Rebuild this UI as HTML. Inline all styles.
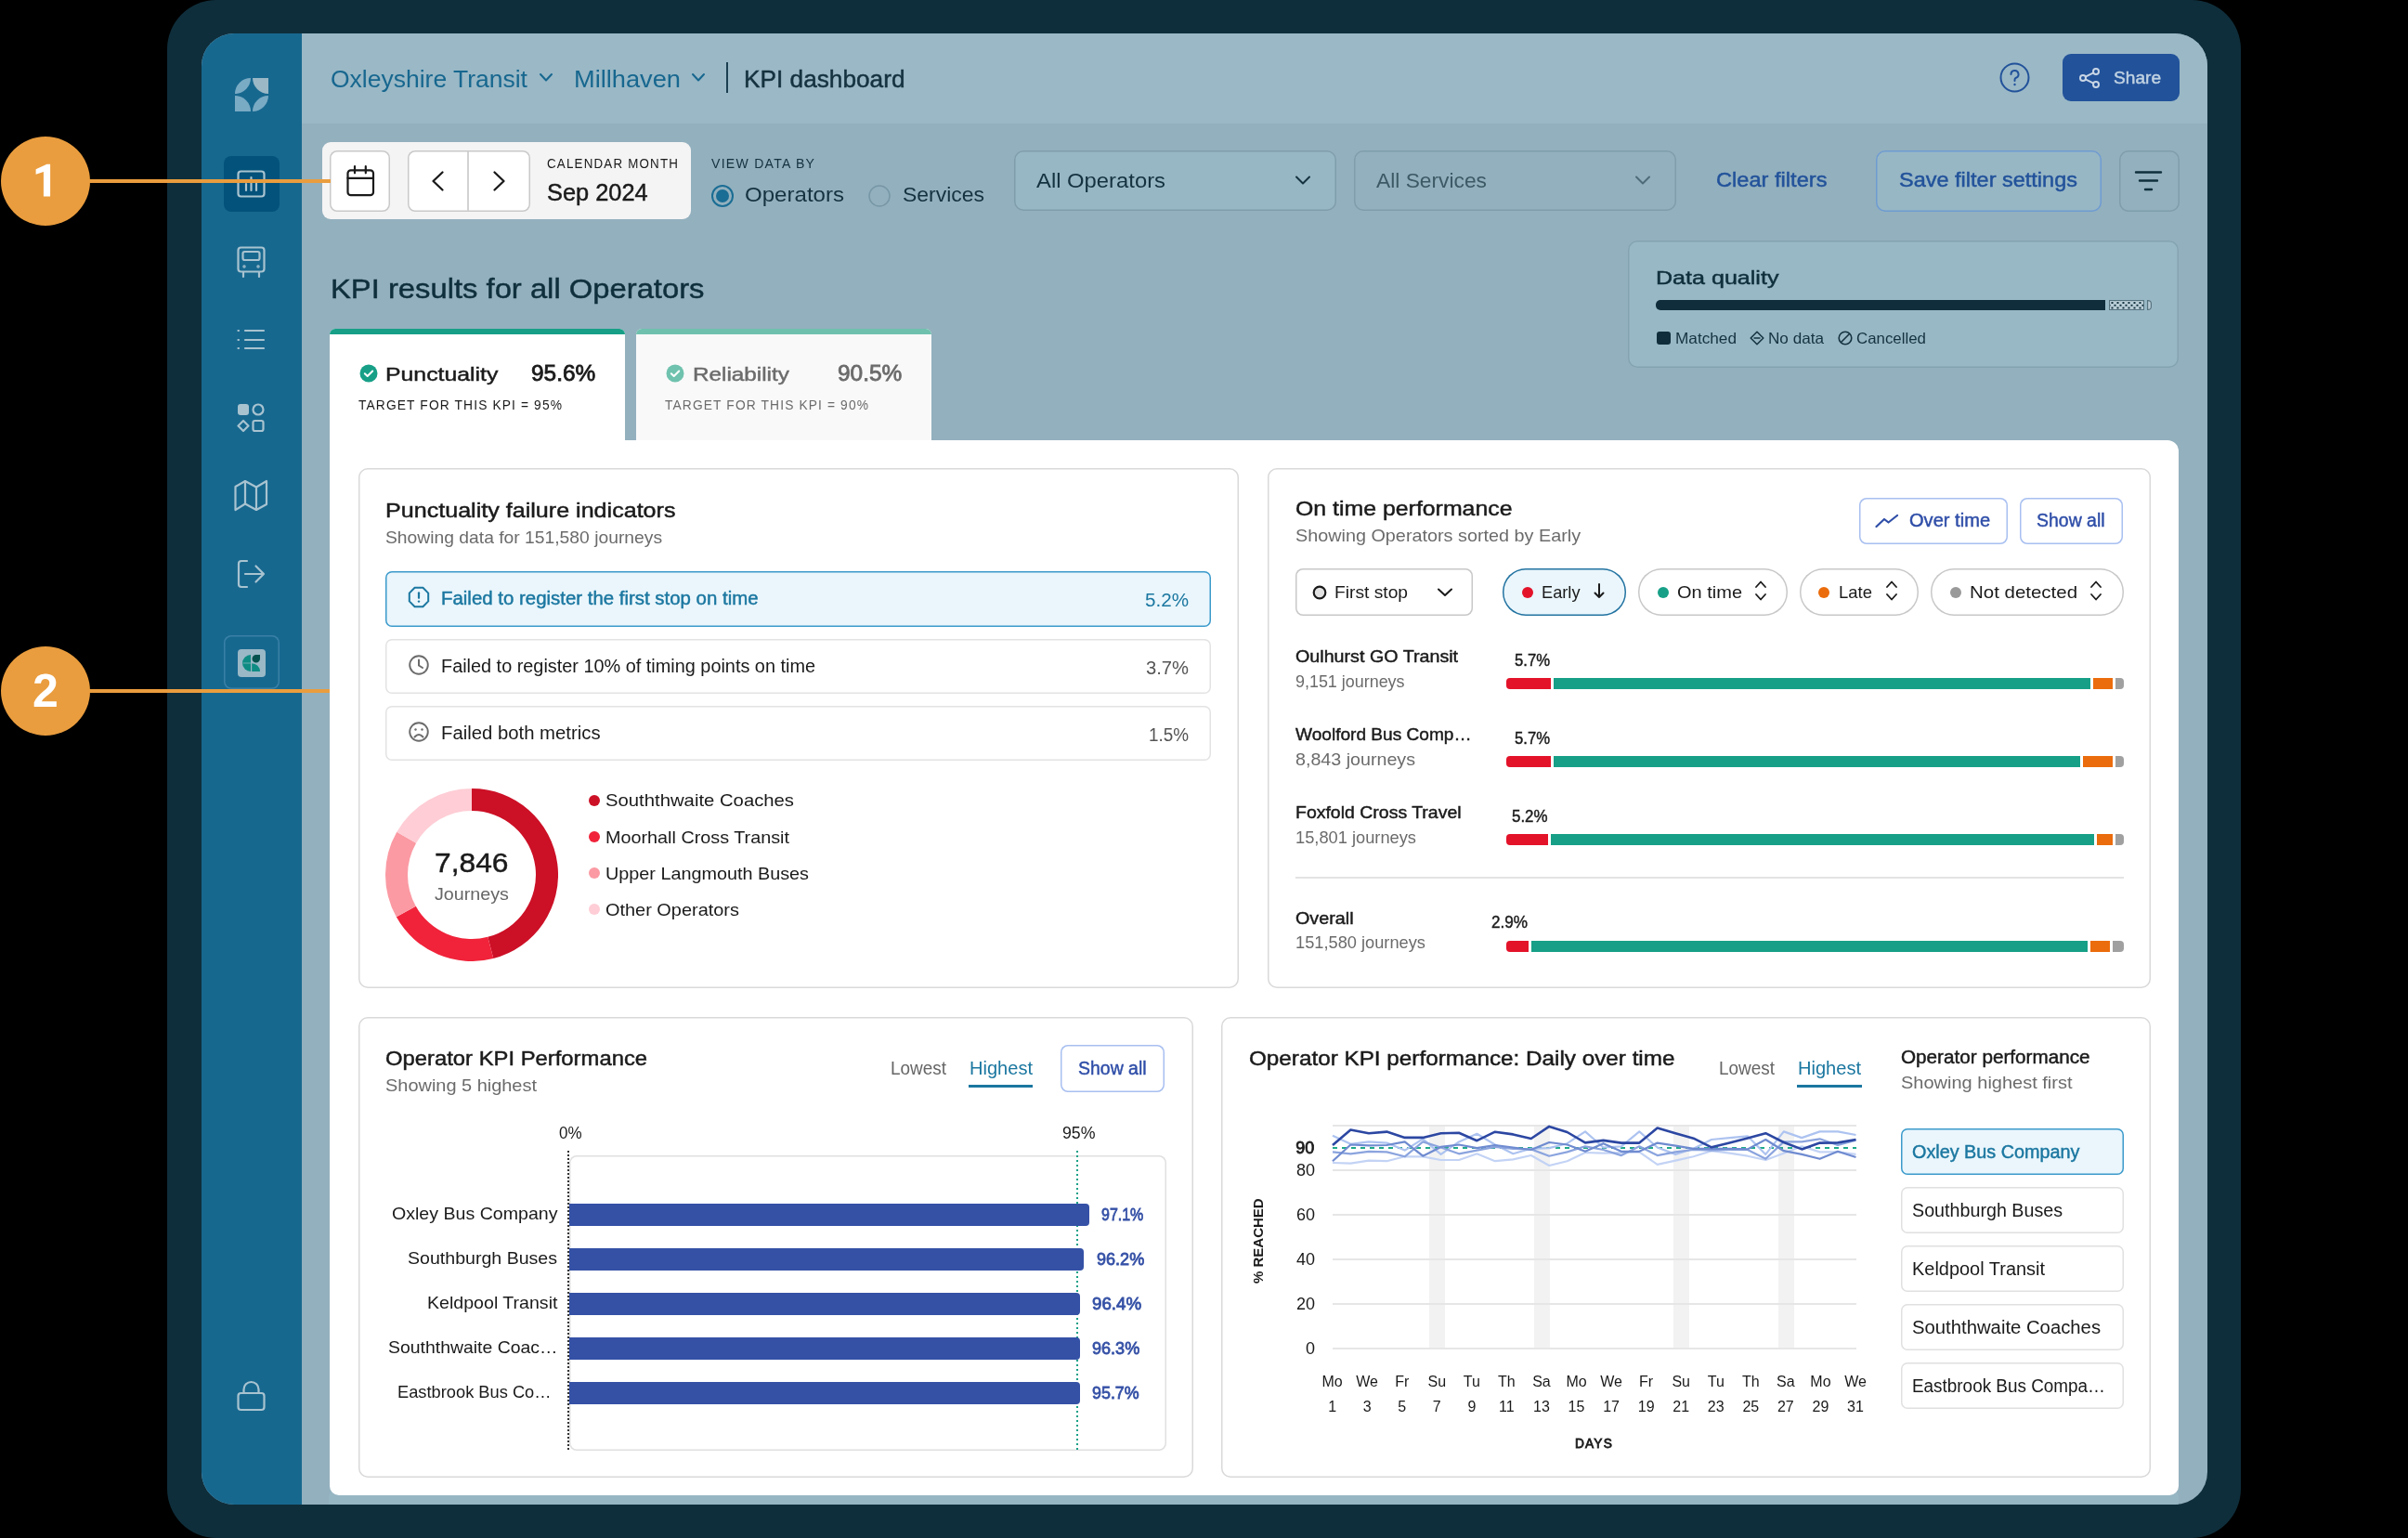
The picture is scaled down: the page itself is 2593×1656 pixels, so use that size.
<!DOCTYPE html>
<html><head><meta charset="utf-8"><style>
html,body{margin:0;padding:0;}
body{width:2593px;height:1656px;background:#000;position:relative;overflow:hidden;font-family:"Liberation Sans",sans-serif;}
.a{position:absolute;}
.t{position:absolute;white-space:nowrap;line-height:1;transform-origin:0 0;}
</style></head><body><div style="position:absolute;left:0;top:0;width:2593px;height:1656px;will-change:transform">
<div class="a" style="left:180px;top:0px;width:2233px;height:1656px;background:#0f2e3b;border-radius:53px;"></div>
<div class="a" style="left:217px;top:36px;width:2160px;height:1584px;background:#93b0be;border-radius:35px;overflow:hidden"><div class="a" style="left:108px;top:0px;width:2052px;height:97px;background:#9ab8c6"></div><div class="a" style="left:0px;top:0px;width:108px;height:1584px;background:#17688f"></div><div class="a" style="left:137px;top:1566px;width:1992px;height:40px;background:#97b6c4;border-radius:10px"></div></div>
<svg class="a" style="left:253px;top:84px;" width="36" height="36" viewBox="0 0 36 36"><path d="M17 0 A17 17 0 0 0 0 17 A17 17 0 0 0 17 0Z" fill="#7aabc4"/><path d="M19 0 L36 0 L36 17 A17 17 0 0 1 19 0Z" fill="#9ab8c6"/><path d="M0 19 A17 17 0 0 1 17 36 L0 36Z" fill="#7aabc4"/><path d="M19 36 A17 17 0 0 1 36 19 A17 17 0 0 1 19 36Z" fill="#7aabc4"/></svg>
<div class="a" style="left:241px;top:168px;width:60px;height:60px;background:#03527b;border-radius:8px;"></div>
<svg class="a" style="left:255px;top:183px;" width="32" height="31" viewBox="0 0 32 31"><g fill="none" stroke="#a8c3d0" stroke-width="2.2" stroke-linecap="round" stroke-linejoin="round"><rect x="1.5" y="1.5" width="28" height="27" rx="3"/><path d="M10 22V15M15.5 22V8M21 22V13"/></g></svg>
<svg class="a" style="left:255px;top:265px;" width="32" height="35" viewBox="0 0 32 35"><g fill="none" stroke="#a8c3d0" stroke-width="2.2" stroke-linecap="round" stroke-linejoin="round"><rect x="1.5" y="1.5" width="28" height="26" rx="3"/><rect x="6.5" y="6" width="18" height="9" rx="2"/><path d="M7 33V28M24 33V28"/><circle cx="8" cy="22" r="0.6"/><circle cx="23" cy="22" r="0.6"/></g></svg>
<svg class="a" style="left:255px;top:354px;" width="32" height="24" viewBox="0 0 32 24"><g fill="none" stroke="#a8c3d0" stroke-width="2.2" stroke-linecap="round" stroke-linejoin="round"><path d="M9 2H29M9 12H29M9 21H29"/><path d="M1.5 2h0.5M1.5 12h0.5M1.5 21h0.5"/></g></svg>
<svg class="a" style="left:255px;top:434px;" width="32" height="33" viewBox="0 0 32 33"><rect x="1" y="1" width="12" height="12" rx="3" fill="#a8c3d0"/><g fill="none" stroke="#a8c3d0" stroke-width="2.2" stroke-linecap="round" stroke-linejoin="round"><circle cx="23" cy="7" r="5.5"/><path d="M7 19 L12.5 24.5 L7 30 L1.5 24.5Z"/><rect x="17.5" y="19" width="11" height="11" rx="2"/></g></svg>
<svg class="a" style="left:252px;top:516px;" width="38" height="36" viewBox="0 0 38 36"><g fill="none" stroke="#a8c3d0" stroke-width="2.2" stroke-linecap="round" stroke-linejoin="round"><path d="M1.5 8 L12 2 L24 8.5 L35 2 V27 L24 33 L12 26.5 L1.5 33Z"/><path d="M12 2V26.5M24 8.5V33"/></g></svg>
<svg class="a" style="left:255px;top:602px;" width="32" height="33" viewBox="0 0 32 33"><g fill="none" stroke="#a8c3d0" stroke-width="2.2" stroke-linecap="round" stroke-linejoin="round"><path d="M11 2H5a3 3 0 0 0-3 3v22a3 3 0 0 0 3 3h6"/><path d="M9 16H29M20.5 7.5L29 16L20.5 24.5"/></g></svg>
<div class="a" style="left:241px;top:684px;width:60px;height:58px;box-shadow:inset 0 0 0 1.5px #3a80a6;border-radius:8px;"></div>
<div class="a" style="left:256px;top:699px;width:30px;height:30px;background:#9ab8c6;border-radius:4px;"></div>
<svg class="a" style="left:261px;top:704px;" width="20" height="20" viewBox="0 0 20 20"><path d="M9 1 A9 9 0 0 0 9 19 Z" fill="#0e8c84"/><path d="M19 1 V5.25 A4.25 4.25 0 1 1 14.75 1 Z" fill="#04524f"/><path d="M10.2 10.2 A8.8 8.8 0 0 1 19 19 H10.2 Z" fill="#0e8c84"/><path d="M0.5 10H9" stroke="#5ea8a8" stroke-width="1.2"/></svg>
<svg class="a" style="left:255px;top:1486px;" width="32" height="35" viewBox="0 0 32 35"><g fill="none" stroke="#a8c3d0" stroke-width="2.2" stroke-linecap="round" stroke-linejoin="round"><rect x="1.5" y="14" width="28" height="18" rx="3"/><path d="M7.5 14V10a8 8 0 0 1 16 0V14"/></g></svg>
<div class="a" style="left:0.5px;top:147px;width:96px;height:96px;border-radius:50%;background:#ea9d3e"></div>
<div class="a" style="left:0.5px;top:696px;width:96px;height:96px;border-radius:50%;background:#ea9d3e"></div>
<svg class="a" style="left:30px;top:170px;" width="40" height="50" viewBox="0 0 40 50"><polygon points="8.6,12.2 20.5,6.8 24.1,6.8 24.1,41.5 16.9,41.5 16.9,15 8.6,17.8" fill="#ffffff"/></svg>
<div class="t" style="left:34.90px;top:718.97px;font-size:50.00px;color:#ffffff;font-weight:700;">2</div>
<div class="a" style="left:96px;top:193px;width:261px;height:4px;background:#ea9d3e;"></div>
<div class="a" style="left:96px;top:742px;width:260px;height:4px;background:#ea9d3e;"></div>
<div class="t" style="left:356.00px;top:73.34px;font-size:25.00px;color:#17678f;transform:scaleX(1.0595);">Oxleyshire Transit</div>
<svg class="a" style="left:580px;top:78px;" width="16" height="12" viewBox="0 0 16 12"><path d="M2 2 L8 8.5 L14 2" fill="none" stroke="#17678f" stroke-width="2" stroke-linecap="round" stroke-linejoin="round"/></svg>
<div class="t" style="left:618.00px;top:73.34px;font-size:25.00px;color:#17678f;transform:scaleX(1.0890);">Millhaven</div>
<svg class="a" style="left:744px;top:78px;" width="16" height="12" viewBox="0 0 16 12"><path d="M2 2 L8 8.5 L14 2" fill="none" stroke="#17678f" stroke-width="2" stroke-linecap="round" stroke-linejoin="round"/></svg>
<div class="a" style="left:782px;top:67px;width:2px;height:33px;background:#1b3f50;"></div>
<div class="t" style="left:801.00px;top:73.34px;font-size:25.00px;color:#14323f;-webkit-text-stroke:0.45px #14323f;transform:scaleX(1.0491);">KPI dashboard</div>
<svg class="a" style="left:2153px;top:67px;" width="33" height="33" viewBox="0 0 33 33"><circle cx="16.5" cy="16.5" r="15" fill="none" stroke="#22529a" stroke-width="2"/><path d="M12.5 13a4 4 0 1 1 5.5 3.7c-1 .5-1.5 1.2-1.5 2.3v1" fill="none" stroke="#22529a" stroke-width="2" stroke-linecap="round"/><circle cx="16.5" cy="24" r="1.2" fill="#22529a"/></svg>
<div class="a" style="left:2221px;top:58px;width:126px;height:51px;background:#22529a;border-radius:9px;"></div>
<svg class="a" style="left:2239px;top:73px;" width="24" height="22" viewBox="0 0 24 22"><g fill="none" stroke="#c9d6e6" stroke-width="2"><circle cx="18" cy="4" r="3"/><circle cx="4" cy="11" r="3"/><circle cx="18" cy="18" r="3"/><path d="M6.7 9.6L15.3 5.4M6.7 12.4L15.3 16.6"/></g></svg>
<div class="t" style="left:2276.00px;top:75.69px;font-size:17.50px;color:#c0d2e2;-webkit-text-stroke:0.45px #c0d2e2;transform:scaleX(1.0923);">Share</div>
<div class="a" style="left:347px;top:153px;width:397px;height:83px;background:#f4f4f4;border-radius:9px;"></div>
<div class="a" style="left:355px;top:162px;width:65px;height:66px;background:#ffffff;box-shadow:inset 0 0 0 1.5px #c9c9c9;border-radius:8px;"></div>
<svg class="a" style="left:371px;top:178px;" width="34" height="36" viewBox="0 0 34 36"><g fill="none" stroke="#1a1a1a" stroke-width="2.2" stroke-linecap="round"><rect x="3.5" y="5.3" width="27.5" height="26.8" rx="3.2"/><path d="M3.5 13.8H31M11 1.2V8.3M22.8 1.2V8.3"/></g></svg>
<div class="a" style="left:439px;top:162px;width:132px;height:66px;background:#ffffff;box-shadow:inset 0 0 0 1.5px #c9c9c9;border-radius:8px;"></div>
<div class="a" style="left:503px;top:163px;width:2px;height:64px;background:#d2d2d2;"></div>
<svg class="a" style="left:461px;top:181px;" width="20" height="28" viewBox="0 0 20 28"><path d="M15.5 4.5 L5.5 14 L15.5 23.5" fill="none" stroke="#1a1a1a" stroke-width="2.3" stroke-linecap="round" stroke-linejoin="round"/></svg>
<svg class="a" style="left:528px;top:181px;" width="20" height="28" viewBox="0 0 20 28"><path d="M4.5 4.5 L14.5 14 L4.5 23.5" fill="none" stroke="#1a1a1a" stroke-width="2.3" stroke-linecap="round" stroke-linejoin="round"/></svg>
<div class="a" style="left:340px;top:193px;width:16px;height:4px;background:#ea9d3e;"></div>
<div class="t" style="left:589.00px;top:169.23px;font-size:14.50px;color:#1a1a1a;letter-spacing:1.300px;transform:scaleX(0.9210);">CALENDAR MONTH</div>
<div class="t" style="left:589.00px;top:195.34px;font-size:25.00px;color:#1a1a1a;-webkit-text-stroke:0.45px #1a1a1a;transform:scaleX(1.0144);">Sep 2024</div>
<div class="t" style="left:766.00px;top:169.23px;font-size:14.50px;color:#14323f;letter-spacing:1.300px;transform:scaleX(0.9694);">VIEW DATA BY</div>
<svg class="a" style="left:765px;top:198px;" width="26" height="26" viewBox="0 0 26 26"><circle cx="13" cy="13" r="11" fill="none" stroke="#1a6d94" stroke-width="2"/><circle cx="13" cy="13" r="7" fill="#1a6d94"/></svg>
<div class="t" style="left:802.00px;top:200.30px;font-size:21.50px;color:#14323f;transform:scaleX(1.1192);">Operators</div>
<svg class="a" style="left:934px;top:198px;" width="26" height="26" viewBox="0 0 26 26"><circle cx="13" cy="13" r="11" fill="none" stroke="#7797a6" stroke-width="1.5"/></svg>
<div class="t" style="left:972.00px;top:200.30px;font-size:21.50px;color:#14323f;transform:scaleX(1.0680);">Services</div>
<div class="a" style="left:1092px;top:162px;width:347px;height:65px;background:#98b7c5;box-shadow:inset 0 0 0 1.5px #7f9dab;border-radius:10px;"></div>
<div class="t" style="left:1116.00px;top:185.30px;font-size:21.50px;color:#14323f;transform:scaleX(1.1076);">All Operators</div>
<svg class="a" style="left:1394px;top:188px;" width="18" height="13" viewBox="0 0 18 13"><path d="M2 2.5 L9 9.5 L16 2.5" fill="none" stroke="#14323f" stroke-width="2" stroke-linecap="round" stroke-linejoin="round"/></svg>
<div class="a" style="left:1458px;top:162px;width:347px;height:65px;background:#93b0be;box-shadow:inset 0 0 0 1.5px #7f9dab;border-radius:10px;"></div>
<div class="t" style="left:1482.00px;top:185.30px;font-size:21.50px;color:#3d5966;transform:scaleX(1.0597);">All Services</div>
<svg class="a" style="left:1760px;top:188px;" width="18" height="13" viewBox="0 0 18 13"><path d="M2 2.5 L9 9.5 L16 2.5" fill="none" stroke="#4d6b78" stroke-width="2" stroke-linecap="round" stroke-linejoin="round"/></svg>
<div class="t" style="left:1848.00px;top:183.80px;font-size:21.50px;color:#22529a;-webkit-text-stroke:0.45px #22529a;transform:scaleX(1.0994);">Clear filters</div>
<div class="a" style="left:2020px;top:162px;width:243px;height:66px;background:#98b7c5;box-shadow:inset 0 0 0 1.5px #6e9bd1;border-radius:10px;"></div>
<div class="t" style="left:2044.50px;top:183.80px;font-size:21.50px;color:#22529a;-webkit-text-stroke:0.45px #22529a;transform:scaleX(1.0928);">Save filter settings</div>
<div class="a" style="left:2282px;top:162px;width:65px;height:66px;background:#93b0be;box-shadow:inset 0 0 0 1.5px #7f9dab;border-radius:10px;"></div>
<svg class="a" style="left:2298px;top:183px;" width="32" height="24" viewBox="0 0 32 24"><path d="M2 2.5H29M6 11.5H25M12 21H19" fill="none" stroke="#0f2f3c" stroke-width="2.4" stroke-linecap="round"/></svg>
<div class="t" style="left:356.00px;top:295.61px;font-size:30.00px;color:#0f2f3c;-webkit-text-stroke:0.45px #0f2f3c;transform:scaleX(1.0923);">KPI results for all Operators</div>
<div class="a" style="left:1753px;top:259px;width:593px;height:137px;background:#99b8c6;box-shadow:inset 0 0 0 1.5px #84a3b1;border-radius:10px;"></div>
<div class="t" style="left:1783.00px;top:288.57px;font-size:20.00px;color:#0f2f3c;-webkit-text-stroke:0.45px #0f2f3c;transform:scaleX(1.2541);">Data quality</div>
<div class="a" style="left:1783px;top:323px;width:484px;height:11px;background:#0f2d3a;border-radius:5px 0 0 5px;"></div>
<div class="a" style="left:2271px;top:323px;width:38px;height:11px;background-color:#b9cdd6;background-image:radial-gradient(circle at 50% 50%,#0f2d3a 0.9px,transparent 1.3px),radial-gradient(circle at 50% 50%,#0f2d3a 0.9px,transparent 1.3px);background-size:6px 5.5px,6px 5.5px;background-position:0.5px 0.3px,3.5px 3px;box-shadow:inset 0 0 0 1px #55727f"></div>
<div class="a" style="left:2312px;top:323px;width:5px;height:11px;background-color:#b9cdd6;border-radius:0 4px 4px 0;box-shadow:inset 0 0 0 1.2px #55727f"></div>
<div class="a" style="left:1784px;top:357px;width:15px;height:14px;background:#0f2d3a;border-radius:3px;"></div>
<div class="t" style="left:1804.00px;top:356.03px;font-size:16.50px;color:#14323f;transform:scaleX(1.0427);">Matched</div>
<svg class="a" style="left:1884px;top:356px;" width="16" height="16" viewBox="0 0 16 16"><path d="M8 1.2L14.8 8L8 14.8L1.2 8Z M4.5 8H11.5" fill="none" stroke="#14323f" stroke-width="1.5" stroke-linejoin="round"/></svg>
<div class="t" style="left:1904.00px;top:356.03px;font-size:16.50px;color:#14323f;transform:scaleX(1.0381);">No data</div>
<svg class="a" style="left:1979px;top:356px;" width="16" height="16" viewBox="0 0 16 16"><circle cx="8" cy="8" r="6.8" fill="none" stroke="#14323f" stroke-width="1.6"/><path d="M3.5 12.5L12.5 3.5" stroke="#14323f" stroke-width="1.6"/></svg>
<div class="t" style="left:1999.00px;top:356.03px;font-size:16.50px;color:#14323f;transform:scaleX(1.0218);">Cancelled</div>
<div class="a" style="left:355px;top:354px;width:318px;height:126px;background:#ffffff;border-top-left-radius:6px;border-top-right-radius:6px;"></div>
<div class="a" style="left:355px;top:354px;width:318px;height:6px;background:#17a087;border-top-left-radius:6px;border-top-right-radius:6px;"></div>
<div class="a" style="left:685px;top:354px;width:318px;height:120px;background:#f9f9f9;border-top-left-radius:6px;border-top-right-radius:6px;"></div>
<div class="a" style="left:685px;top:354px;width:318px;height:6px;background:#6fc1ae;border-top-left-radius:6px;border-top-right-radius:6px;"></div>
<svg class="a" style="left:387px;top:392px;" width="20" height="20" viewBox="0 0 20 20"><circle cx="10" cy="10" r="9.5" fill="#17a087"/><path d="M5.8 10.2L8.7 13L14.2 7.5" fill="none" stroke="#fff" stroke-width="2" stroke-linecap="round" stroke-linejoin="round"/></svg>
<div class="t" style="left:415.00px;top:393.15px;font-size:20.50px;color:#1a1a1a;-webkit-text-stroke:0.45px #1a1a1a;transform:scaleX(1.2109);">Punctuality</div>
<div class="t" style="left:572.00px;top:390.61px;font-size:23.50px;color:#1a1a1a;-webkit-text-stroke:0.8px #1a1a1a;transform:scaleX(1.0386);">95.6%</div>
<div class="t" style="left:386.00px;top:429.47px;font-size:14.80px;color:#1a1a1a;letter-spacing:1.200px;transform:scaleX(0.9327);">TARGET FOR THIS KPI = 95%</div>
<svg class="a" style="left:717px;top:392px;" width="20" height="20" viewBox="0 0 20 20"><circle cx="10" cy="10" r="9.5" fill="#6fc2ae"/><path d="M5.8 10.2L8.7 13L14.2 7.5" fill="none" stroke="#fff" stroke-width="2" stroke-linecap="round" stroke-linejoin="round"/></svg>
<div class="t" style="left:745.50px;top:393.15px;font-size:20.50px;color:#6b6b6b;-webkit-text-stroke:0.45px #6b6b6b;transform:scaleX(1.1841);">Reliability</div>
<div class="t" style="left:902.00px;top:390.61px;font-size:23.50px;color:#6b6b6b;-webkit-text-stroke:0.8px #6b6b6b;transform:scaleX(1.0386);">90.5%</div>
<div class="t" style="left:716.00px;top:429.47px;font-size:14.80px;color:#6b6b6b;letter-spacing:1.200px;transform:scaleX(0.9327);">TARGET FOR THIS KPI = 90%</div>
<div class="a" style="left:355px;top:474px;width:1991px;height:1136px;background:#ffffff;border-radius:0 12px 10px 10px"></div>
<div class="a" style="left:386px;top:504px;width:948px;height:560px;background:#ffffff;box-shadow:inset 0 0 0 1.5px #d9d9d9;border-radius:10px;"></div>
<div class="t" style="left:415.00px;top:539.80px;font-size:21.50px;color:#1a1a1a;-webkit-text-stroke:0.45px #1a1a1a;transform:scaleX(1.1673);">Punctuality failure indicators</div>
<div class="t" style="left:415.00px;top:568.92px;font-size:19.00px;color:#6b6b6b;transform:scaleX(1.0150);">Showing data for 151,580 journeys</div>
<div class="a" style="left:415px;top:615px;width:889px;height:60px;background:#eaf6fc;box-shadow:inset 0 0 0 1.5px #3b9acb;border-radius:7px;"></div>
<svg class="a" style="left:438px;top:630px;" width="26" height="26" viewBox="0 0 26 26"><path d="M8.6 2.8H17.4L23.2 8.6V17.4L17.4 23.2H8.6L2.8 17.4V8.6Z" fill="none" stroke="#1b77a0" stroke-width="2" stroke-linejoin="round"/><path d="M13 8.3V13.8" stroke="#1b77a0" stroke-width="2.2" stroke-linecap="round"/><circle cx="13" cy="17.6" r="1.2" fill="#1b77a0"/></svg>
<div class="t" style="left:475.00px;top:635.49px;font-size:19.50px;color:#1b77a0;-webkit-text-stroke:0.45px #1b77a0;transform:scaleX(1.0470);">Failed to register the first stop on time</div>
<div class="t" style="left:1233.00px;top:635.65px;font-size:20.50px;color:#1b77a0;transform:scaleX(1.0064);">5.2%</div>
<div class="a" style="left:415px;top:688px;width:889px;height:59px;background:#ffffff;box-shadow:inset 0 0 0 1.5px #e3e3e3;border-radius:7px;"></div>
<svg class="a" style="left:438px;top:703px;" width="26" height="26" viewBox="0 0 26 26"><circle cx="13" cy="13" r="9.8" fill="none" stroke="#6b6b6b" stroke-width="1.9"/><path d="M13 7.5V13.5L17 16" fill="none" stroke="#6b6b6b" stroke-width="2" stroke-linecap="round"/></svg>
<div class="t" style="left:475.00px;top:708.49px;font-size:19.50px;color:#1a1a1a;transform:scaleX(1.0187);">Failed to register 10% of timing points on time</div>
<div class="t" style="left:1234.00px;top:708.65px;font-size:20.50px;color:#555555;transform:scaleX(0.9850);">3.7%</div>
<div class="a" style="left:415px;top:760px;width:889px;height:59px;background:#ffffff;box-shadow:inset 0 0 0 1.5px #e3e3e3;border-radius:7px;"></div>
<svg class="a" style="left:438px;top:775px;" width="26" height="26" viewBox="0 0 26 26"><circle cx="13" cy="13" r="9.8" fill="none" stroke="#6b6b6b" stroke-width="1.9"/><path d="M8.5 18.5Q13 13.5 17.5 18.5" fill="none" stroke="#6b6b6b" stroke-width="2" stroke-linecap="round"/><circle cx="9.5" cy="10.5" r="1.2" fill="#6b6b6b"/><circle cx="16.5" cy="10.5" r="1.2" fill="#6b6b6b"/></svg>
<div class="t" style="left:475.00px;top:780.49px;font-size:19.50px;color:#1a1a1a;transform:scaleX(1.0413);">Failed both metrics</div>
<div class="t" style="left:1237.00px;top:780.65px;font-size:20.50px;color:#555555;transform:scaleX(0.9208);">1.5%</div>
<svg class="a" style="left:415px;top:849px;" width="186" height="186" viewBox="0 0 186 186"><path d="M93.00 0.00A93 93 0 0 1 116.29 183.04L110.28 159.80A69 69 0 0 0 93.00 24.00Z" fill="#cc1026"/><path d="M116.29 183.04A93 93 0 0 1 11.82 138.37L32.77 126.66A69 69 0 0 0 110.28 159.80Z" fill="#f0233a"/><path d="M11.82 138.37A93 93 0 0 1 12.30 46.78L33.12 58.71A69 69 0 0 0 32.77 126.66Z" fill="#fb9aa3"/><path d="M12.30 46.78A93 93 0 0 1 93.00 0.00L93.00 24.00A69 69 0 0 0 33.12 58.71Z" fill="#fecdd5"/></svg>
<div class="t" style="left:468.00px;top:914.95px;font-size:29.00px;color:#1a1a1a;-webkit-text-stroke:0.45px #1a1a1a;transform:scaleX(1.0951);">7,846</div>
<div class="t" style="left:468.00px;top:953.84px;font-size:18.50px;color:#666666;transform:scaleX(1.0652);">Journeys</div>
<div class="a" style="left:634px;top:856.0px;width:12px;height:12px;border-radius:50%;background:#cc1026"></div>
<div class="t" style="left:652.00px;top:853.44px;font-size:18.50px;color:#1a1a1a;transform:scaleX(1.0967);">Souththwaite Coaches</div>
<div class="a" style="left:634px;top:895.1px;width:12px;height:12px;border-radius:50%;background:#f0233a"></div>
<div class="t" style="left:652.00px;top:892.54px;font-size:18.50px;color:#1a1a1a;transform:scaleX(1.0697);">Moorhall Cross Transit</div>
<div class="a" style="left:634px;top:934.2px;width:12px;height:12px;border-radius:50%;background:#fb9aa3"></div>
<div class="t" style="left:652.00px;top:931.64px;font-size:18.50px;color:#1a1a1a;transform:scaleX(1.0699);">Upper Langmouth Buses</div>
<div class="a" style="left:634px;top:973.3px;width:12px;height:12px;border-radius:50%;background:#fecdd5"></div>
<div class="t" style="left:652.00px;top:970.74px;font-size:18.50px;color:#1a1a1a;transform:scaleX(1.0770);">Other Operators</div>
<div class="a" style="left:1365px;top:504px;width:951px;height:560px;background:#ffffff;box-shadow:inset 0 0 0 1.5px #d9d9d9;border-radius:10px;"></div>
<div class="t" style="left:1395.00px;top:538.30px;font-size:21.50px;color:#1a1a1a;-webkit-text-stroke:0.45px #1a1a1a;transform:scaleX(1.1564);">On time performance</div>
<div class="t" style="left:1395.00px;top:566.92px;font-size:19.00px;color:#6b6b6b;transform:scaleX(1.0421);">Showing Operators sorted by Early</div>
<div class="a" style="left:2002px;top:536px;width:160px;height:50px;background:#ffffff;box-shadow:inset 0 0 0 1.5px #a8bff0;border-radius:8px;"></div>
<svg class="a" style="left:2018px;top:552px;" width="28" height="18" viewBox="0 0 28 18"><path d="M2.5 15L11 7L15.5 10.5L25 3" fill="none" stroke="#2f4ea8" stroke-width="2.2" stroke-linecap="round" stroke-linejoin="round"/></svg>
<div class="t" style="left:2056.00px;top:551.49px;font-size:19.50px;color:#2f4ea8;-webkit-text-stroke:0.45px #2f4ea8;transform:scaleX(1.0300);">Over time</div>
<div class="a" style="left:2175px;top:536px;width:111px;height:50px;background:#ffffff;box-shadow:inset 0 0 0 1.5px #a8bff0;border-radius:8px;"></div>
<div class="t" style="left:2193.00px;top:551.49px;font-size:19.50px;color:#2f4ea8;-webkit-text-stroke:0.45px #2f4ea8;transform:scaleX(0.9980);">Show all</div>
<div class="a" style="left:1395px;top:612px;width:191px;height:51px;background:#ffffff;box-shadow:inset 0 0 0 1.5px #c8c8c8;border-radius:8px;"></div>
<svg class="a" style="left:1413px;top:630px;" width="16" height="16" viewBox="0 0 16 16"><circle cx="8" cy="8" r="6.3" fill="#e2e2e2" stroke="#1a1a1a" stroke-width="2.2"/></svg>
<div class="t" style="left:1437.00px;top:627.92px;font-size:19.00px;color:#1a1a1a;transform:scaleX(1.0115);">First stop</div>
<svg class="a" style="left:1547px;top:632px;" width="18" height="12" viewBox="0 0 18 12"><path d="M2 2.5L9 9L16 2.5" fill="none" stroke="#1a1a1a" stroke-width="2" stroke-linecap="round" stroke-linejoin="round"/></svg>
<div class="a" style="left:1618px;top:612px;width:133px;height:51px;background:#eaf6fc;box-shadow:inset 0 0 0 1.5px #2373a1;border-radius:25px;"></div>
<div class="a" style="left:1639px;top:631.5px;width:12px;height:12px;border-radius:50%;background:#e3132a"></div>
<div class="t" style="left:1660.00px;top:627.92px;font-size:19.00px;color:#1a1a1a;transform:scaleX(0.9584);">Early</div>
<svg class="a" style="left:1715px;top:625px;" width="14" height="22" viewBox="0 0 14 22"><path d="M7 4V18M2.5 13.5L7 18L11.5 13.5" fill="none" stroke="#1a1a1a" stroke-width="2" stroke-linecap="round" stroke-linejoin="round"/></svg>
<div class="a" style="left:1764px;top:612px;width:161px;height:51px;background:#ffffff;box-shadow:inset 0 0 0 1.5px #c8c8c8;border-radius:25px;"></div>
<div class="a" style="left:1784.5px;top:631.5px;width:12px;height:12px;border-radius:50%;background:#17a087"></div>
<div class="t" style="left:1806.00px;top:627.92px;font-size:19.00px;color:#1a1a1a;transform:scaleX(1.0526);">On time</div>
<svg class="a" style="left:1888.5px;top:624px;" width="14" height="24" viewBox="0 0 14 24"><path d="M2 8L7 2.5L12 8M2 16L7 21.5L12 16" fill="none" stroke="#1a1a1a" stroke-width="1.8" stroke-linecap="round" stroke-linejoin="round"/></svg>
<div class="a" style="left:1938px;top:612px;width:128px;height:51px;background:#ffffff;box-shadow:inset 0 0 0 1.5px #c8c8c8;border-radius:25px;"></div>
<div class="a" style="left:1958px;top:631.5px;width:12px;height:12px;border-radius:50%;background:#eb6c0c"></div>
<div class="t" style="left:1980.00px;top:627.92px;font-size:19.00px;color:#1a1a1a;transform:scaleX(0.9730);">Late</div>
<svg class="a" style="left:2029.5px;top:624px;" width="14" height="24" viewBox="0 0 14 24"><path d="M2 8L7 2.5L12 8M2 16L7 21.5L12 16" fill="none" stroke="#1a1a1a" stroke-width="1.8" stroke-linecap="round" stroke-linejoin="round"/></svg>
<div class="a" style="left:2079px;top:612px;width:208px;height:51px;background:#ffffff;box-shadow:inset 0 0 0 1.5px #c8c8c8;border-radius:25px;"></div>
<div class="a" style="left:2099.5px;top:631.5px;width:12px;height:12px;border-radius:50%;background:#999999"></div>
<div class="t" style="left:2120.50px;top:627.92px;font-size:19.00px;color:#1a1a1a;transform:scaleX(1.0771);">Not detected</div>
<svg class="a" style="left:2249.5px;top:624px;" width="14" height="24" viewBox="0 0 14 24"><path d="M2 8L7 2.5L12 8M2 16L7 21.5L12 16" fill="none" stroke="#1a1a1a" stroke-width="1.8" stroke-linecap="round" stroke-linejoin="round"/></svg>
<div class="t" style="left:1395.00px;top:697.42px;font-size:19.00px;color:#1a1a1a;-webkit-text-stroke:0.45px #1a1a1a;transform:scaleX(1.0363);">Oulhurst GO Transit</div>
<div class="t" style="left:1395.00px;top:724.42px;font-size:19.00px;color:#6b6b6b;transform:scaleX(0.9430);">9,151 journeys</div>
<div class="t" style="left:1631.00px;top:701.84px;font-size:18.50px;color:#1a1a1a;-webkit-text-stroke:0.45px #1a1a1a;transform:scaleX(0.9027);">5.7%</div>
<div class="a" style="left:1622px;top:730px;width:48px;height:12px;background:#e3132a;border-radius:4px 0 0 4px;"></div>
<div class="a" style="left:1673px;top:730px;width:578px;height:12px;background:#17a087;"></div>
<div class="a" style="left:2254px;top:730px;width:21px;height:12px;background:#eb6c0c;"></div>
<div class="a" style="left:2278px;top:730px;width:9px;height:12px;background:#a0a0a0;border-radius:0 4px 4px 0;"></div>
<div class="t" style="left:1395.00px;top:781.42px;font-size:19.00px;color:#1a1a1a;-webkit-text-stroke:0.45px #1a1a1a;transform:scaleX(1.0045);">Woolford Bus Comp…</div>
<div class="t" style="left:1395.00px;top:808.42px;font-size:19.00px;color:#6b6b6b;transform:scaleX(1.0353);">8,843 journeys</div>
<div class="t" style="left:1631.00px;top:785.84px;font-size:18.50px;color:#1a1a1a;-webkit-text-stroke:0.45px #1a1a1a;transform:scaleX(0.9027);">5.7%</div>
<div class="a" style="left:1622px;top:814px;width:48px;height:12px;background:#e3132a;border-radius:4px 0 0 4px;"></div>
<div class="a" style="left:1673px;top:814px;width:567px;height:12px;background:#17a087;"></div>
<div class="a" style="left:2243px;top:814px;width:32px;height:12px;background:#eb6c0c;"></div>
<div class="a" style="left:2278px;top:814px;width:9px;height:12px;background:#a0a0a0;border-radius:0 4px 4px 0;"></div>
<div class="t" style="left:1395.00px;top:865.42px;font-size:19.00px;color:#1a1a1a;-webkit-text-stroke:0.45px #1a1a1a;transform:scaleX(1.0249);">Foxfold Cross Travel</div>
<div class="t" style="left:1395.00px;top:892.42px;font-size:19.00px;color:#6b6b6b;transform:scaleX(0.9615);">15,801 journeys</div>
<div class="t" style="left:1627.50px;top:869.84px;font-size:18.50px;color:#1a1a1a;-webkit-text-stroke:0.45px #1a1a1a;transform:scaleX(0.9144);">5.2%</div>
<div class="a" style="left:1622px;top:898px;width:45px;height:12px;background:#e3132a;border-radius:4px 0 0 4px;"></div>
<div class="a" style="left:1670px;top:898px;width:585px;height:12px;background:#17a087;"></div>
<div class="a" style="left:2258px;top:898px;width:17px;height:12px;background:#eb6c0c;"></div>
<div class="a" style="left:2278px;top:898px;width:9px;height:12px;background:#a0a0a0;border-radius:0 4px 4px 0;"></div>
<div class="a" style="left:1395px;top:944px;width:892px;height:2px;background:#e3e3e3;"></div>
<div class="t" style="left:1395.00px;top:979.42px;font-size:19.00px;color:#1a1a1a;-webkit-text-stroke:0.45px #1a1a1a;transform:scaleX(1.0387);">Overall</div>
<div class="t" style="left:1395.00px;top:1005.42px;font-size:19.00px;color:#6b6b6b;transform:scaleX(0.9602);">151,580 journeys</div>
<div class="t" style="left:1606.00px;top:983.84px;font-size:18.50px;color:#1a1a1a;-webkit-text-stroke:0.45px #1a1a1a;transform:scaleX(0.9261);">2.9%</div>
<div class="a" style="left:1622px;top:1012.5px;width:24px;height:12.0px;background:#e3132a;border-radius:4px 0 0 4px;"></div>
<div class="a" style="left:1649px;top:1012.5px;width:599px;height:12.0px;background:#17a087;"></div>
<div class="a" style="left:2251px;top:1012.5px;width:21px;height:12.0px;background:#eb6c0c;"></div>
<div class="a" style="left:2275px;top:1012.5px;width:12px;height:12.0px;background:#a0a0a0;border-radius:0 4px 4px 0;"></div>
<div class="a" style="left:386px;top:1095px;width:899px;height:496px;background:#ffffff;box-shadow:inset 0 0 0 1.5px #d9d9d9;border-radius:10px;"></div>
<div class="t" style="left:415.00px;top:1130.30px;font-size:21.50px;color:#1a1a1a;-webkit-text-stroke:0.45px #1a1a1a;transform:scaleX(1.1081);">Operator KPI Performance</div>
<div class="t" style="left:415.00px;top:1159.42px;font-size:19.00px;color:#6b6b6b;transform:scaleX(1.0496);">Showing 5 highest</div>
<div class="t" style="left:958.50px;top:1140.99px;font-size:19.50px;color:#666666;transform:scaleX(0.9709);">Lowest</div>
<div class="t" style="left:1044.00px;top:1140.99px;font-size:19.50px;color:#1b77a0;transform:scaleX(1.0287);">Highest</div>
<div class="a" style="left:1043px;top:1168px;width:69px;height:3px;background:#1b77a0;"></div>
<div class="a" style="left:1142px;top:1125px;width:112px;height:51px;background:#ffffff;box-shadow:inset 0 0 0 1.5px #a8bff0;border-radius:8px;"></div>
<div class="t" style="left:1161.00px;top:1140.99px;font-size:19.50px;color:#2f4ea8;-webkit-text-stroke:0.45px #2f4ea8;transform:scaleX(0.9980);">Show all</div>
<div class="t" style="left:602.00px;top:1210.84px;font-size:18.50px;color:#1a1a1a;transform:scaleX(0.9176);">0%</div>
<div class="t" style="left:1143.50px;top:1210.84px;font-size:18.50px;color:#1a1a1a;transform:scaleX(0.9595);">95%</div>
<div class="a" style="left:613px;top:1244px;width:643px;height:318px;background:#ffffff;box-shadow:inset 0 0 0 1.5px #e0e0e0;border-radius:8px;"></div>
<div class="a" style="left:611px;top:1239px;width:2px;height:322px;background-image:linear-gradient(#333 50%,transparent 50%);background-size:2px 4px"></div>
<div class="a" style="left:1159px;top:1239px;width:2px;height:322px;background-image:linear-gradient(#17a087 50%,transparent 50%);background-size:2px 5px"></div>
<div class="a" style="left:613px;top:1296px;width:560px;height:23.5px;background:#3551a6;border-radius:0 4px 4px 0;"></div>
<div class="t" style="left:421.50px;top:1297.42px;font-size:19.00px;color:#1a1a1a;transform:scaleX(1.0306);">Oxley Bus Company</div>
<div class="t" style="left:1186.00px;top:1298.84px;font-size:18.50px;color:#3551a6;-webkit-text-stroke:0.8px #3551a6;transform:scaleX(0.8630);">97.1%</div>
<div class="a" style="left:613px;top:1344px;width:554px;height:23.5px;background:#3551a6;border-radius:0 4px 4px 0;"></div>
<div class="t" style="left:439.00px;top:1345.42px;font-size:19.00px;color:#1a1a1a;transform:scaleX(1.0301);">Southburgh Buses</div>
<div class="t" style="left:1180.50px;top:1346.84px;font-size:18.50px;color:#3551a6;-webkit-text-stroke:0.8px #3551a6;transform:scaleX(0.9756);">96.2%</div>
<div class="a" style="left:613px;top:1392px;width:549.5px;height:23.5px;background:#3551a6;border-radius:0 4px 4px 0;"></div>
<div class="t" style="left:459.50px;top:1393.42px;font-size:19.00px;color:#1a1a1a;transform:scaleX(1.0308);">Keldpool Transit</div>
<div class="t" style="left:1175.50px;top:1394.84px;font-size:18.50px;color:#3551a6;-webkit-text-stroke:0.8px #3551a6;transform:scaleX(1.0131);">96.4%</div>
<div class="a" style="left:613px;top:1440px;width:549.5px;height:23.5px;background:#3551a6;border-radius:0 4px 4px 0;"></div>
<div class="t" style="left:417.50px;top:1441.42px;font-size:19.00px;color:#1a1a1a;transform:scaleX(1.0224);">Souththwaite Coac…</div>
<div class="t" style="left:1175.50px;top:1442.84px;font-size:18.50px;color:#3551a6;-webkit-text-stroke:0.8px #3551a6;transform:scaleX(0.9756);">96.3%</div>
<div class="a" style="left:613px;top:1488px;width:549.5px;height:23.5px;background:#3551a6;border-radius:0 4px 4px 0;"></div>
<div class="t" style="left:427.50px;top:1489.42px;font-size:19.00px;color:#1a1a1a;transform:scaleX(0.9617);">Eastbrook Bus Co…</div>
<div class="t" style="left:1175.50px;top:1490.84px;font-size:18.50px;color:#3551a6;-webkit-text-stroke:0.8px #3551a6;transform:scaleX(0.9662);">95.7%</div>
<div class="a" style="left:1315px;top:1095px;width:1001px;height:496px;background:#ffffff;box-shadow:inset 0 0 0 1.5px #d9d9d9;border-radius:10px;"></div>
<div class="t" style="left:1345.00px;top:1129.80px;font-size:21.50px;color:#1a1a1a;-webkit-text-stroke:0.45px #1a1a1a;transform:scaleX(1.1285);">Operator KPI performance: Daily over time</div>
<div class="t" style="left:1851.00px;top:1140.99px;font-size:19.50px;color:#666666;transform:scaleX(0.9709);">Lowest</div>
<div class="t" style="left:1936.00px;top:1140.99px;font-size:19.50px;color:#1b77a0;transform:scaleX(1.0287);">Highest</div>
<div class="a" style="left:1935px;top:1168px;width:70px;height:3px;background:#1b77a0;"></div>
<div class="t" style="left:2047.00px;top:1128.99px;font-size:19.50px;color:#1a1a1a;-webkit-text-stroke:0.45px #1a1a1a;transform:scaleX(1.0611);">Operator performance</div>
<div class="t" style="left:2047.00px;top:1155.92px;font-size:19.00px;color:#6b6b6b;transform:scaleX(1.0525);">Showing highest first</div>
<div class="a" style="left:2047px;top:1215px;width:240px;height:50px;background:#eaf6fc;box-shadow:inset 0 0 0 1.5px #3b9acb;border-radius:7px;"></div>
<div class="t" style="left:2059.00px;top:1231.49px;font-size:19.50px;color:#1b77a0;-webkit-text-stroke:0.45px #1b77a0;transform:scaleX(1.0154);">Oxley Bus Company</div>
<div class="a" style="left:2047px;top:1278px;width:240px;height:50px;background:#ffffff;box-shadow:inset 0 0 0 1.5px #e0e0e0;border-radius:7px;"></div>
<div class="t" style="left:2059.00px;top:1294.49px;font-size:19.50px;color:#1a1a1a;transform:scaleX(1.0100);">Southburgh Buses</div>
<div class="a" style="left:2047px;top:1341px;width:240px;height:50px;background:#ffffff;box-shadow:inset 0 0 0 1.5px #e0e0e0;border-radius:7px;"></div>
<div class="t" style="left:2059.00px;top:1357.49px;font-size:19.50px;color:#1a1a1a;transform:scaleX(1.0229);">Keldpool Transit</div>
<div class="a" style="left:2047px;top:1404px;width:240px;height:50px;background:#ffffff;box-shadow:inset 0 0 0 1.5px #e0e0e0;border-radius:7px;"></div>
<div class="t" style="left:2059.00px;top:1420.49px;font-size:19.50px;color:#1a1a1a;transform:scaleX(1.0405);">Souththwaite Coaches</div>
<div class="a" style="left:2047px;top:1467px;width:240px;height:50px;background:#ffffff;box-shadow:inset 0 0 0 1.5px #e0e0e0;border-radius:7px;"></div>
<div class="t" style="left:2059.00px;top:1483.49px;font-size:19.50px;color:#1a1a1a;transform:scaleX(0.9692);">Eastbrook Bus Compa…</div>
<div class="a" style="left:1539.4px;top:1211px;width:17.0px;height:241px;background:#f2f2f2;"></div>
<div class="a" style="left:1652.0px;top:1211px;width:17.0px;height:241px;background:#f2f2f2;"></div>
<div class="a" style="left:1802.2px;top:1211px;width:17.0px;height:241px;background:#f2f2f2;"></div>
<div class="a" style="left:1914.9px;top:1211px;width:17.0px;height:241px;background:#f2f2f2;"></div>
<div class="a" style="left:1435px;top:1450.5px;width:564px;height:2.0px;background:#e6e6e6;"></div>
<div class="a" style="left:1435px;top:1402.5px;width:564px;height:2.0px;background:#e6e6e6;"></div>
<div class="a" style="left:1435px;top:1354.5px;width:564px;height:2.0px;background:#e6e6e6;"></div>
<div class="a" style="left:1435px;top:1306.5px;width:564px;height:2.0px;background:#e6e6e6;"></div>
<div class="a" style="left:1435px;top:1258.5px;width:564px;height:2.0px;background:#e6e6e6;"></div>
<div class="a" style="left:1435px;top:1210.5px;width:564px;height:2.0px;background:#e6e6e6;"></div>
<div class="t" style="left:1406.00px;top:1443.26px;font-size:18.00px;color:#1a1a1a;">0</div>
<div class="t" style="left:1396.00px;top:1395.26px;font-size:18.00px;color:#1a1a1a;">20</div>
<div class="t" style="left:1396.00px;top:1347.26px;font-size:18.00px;color:#1a1a1a;">40</div>
<div class="t" style="left:1396.00px;top:1299.26px;font-size:18.00px;color:#1a1a1a;">60</div>
<div class="t" style="left:1396.00px;top:1251.26px;font-size:18.00px;color:#1a1a1a;">80</div>
<div class="t" style="left:1395.20px;top:1226.76px;font-size:18.00px;color:#1a1a1a;-webkit-text-stroke:0.8px #1a1a1a;">90</div>
<div class="a" style="left:1435px;top:1235px;width:564px;height:2px;background-image:linear-gradient(90deg,#1faa8a 50%,transparent 50%);background-size:10px 2px"></div>
<svg class="a" style="left:1425px;top:1200px;" width="590" height="70" viewBox="0 0 590 70"><polyline points="10.0,52.0 29.4,52.7 48.9,49.6 68.3,50.2 87.7,45.3 107.2,45.3 126.6,49.0 146.0,49.0 165.4,42.3 184.9,50.2 204.3,48.4 223.7,44.0 243.2,55.0 262.6,50.2 282.0,41.0 301.5,41.7 320.9,41.1 340.3,40.4 359.7,53.9 379.2,49.6 398.6,45.3 418.0,39.2 437.5,41.7 456.9,44.7 476.3,49.0 495.8,41.7 515.2,34.3 534.6,40.4 554.0,40.4 573.5,42.9" fill="none" stroke="#c3d3f5" stroke-width="2.2" stroke-linejoin="round"/><polyline points="10.0,22.7 29.4,31.8 48.9,29.4 68.3,30.6 87.7,38.6 107.2,26.3 126.6,42.9 146.0,29.4 165.4,20.8 184.9,32.5 204.3,42.3 223.7,36.8 243.2,36.1 262.6,31.2 282.0,18.4 301.5,35.5 320.9,34.3 340.3,18.4 359.7,35.5 379.2,42.9 398.6,36.8 418.0,27.0 437.5,25.1 456.9,23.3 476.3,42.9 495.8,18.4 515.2,25.1 534.6,18.4 554.0,18.4 573.5,22.0" fill="none" stroke="#adc3f0" stroke-width="2.2" stroke-linejoin="round"/><polyline points="10.0,40.4 29.4,42.3 48.9,39.8 68.3,40.4 87.7,45.3 107.2,29.4 126.6,35.5 146.0,42.3 165.4,38.6 184.9,34.9 204.3,36.8 223.7,37.4 243.2,44.7 262.6,40.4 282.0,34.3 301.5,38.0 320.9,44.1 340.3,34.3 359.7,44.1 379.2,40.4 398.6,38.0 418.0,38.6 437.5,38.0 456.9,38.0 476.3,47.8 495.8,29.4 515.2,29.4 534.6,26.3 554.0,33.0 573.5,27.6" fill="none" stroke="#8ba4de" stroke-width="2.2" stroke-linejoin="round"/><polyline points="10.0,50.2 29.4,32.5 48.9,33.3 68.3,33.0 87.7,29.4 107.2,44.7 126.6,34.9 146.0,32.5 165.4,36.1 184.9,33.0 204.3,35.5 223.7,38.0 243.2,30.0 262.6,32.5 282.0,39.8 301.5,31.2 320.9,39.8 340.3,39.8 359.7,30.6 379.2,33.7 398.6,36.8 418.0,36.8 437.5,36.8 456.9,37.4 476.3,27.0 495.8,39.2 515.2,42.9 534.6,47.8 554.0,39.8 573.5,46.0" fill="none" stroke="#6f8bd0" stroke-width="2.2" stroke-linejoin="round"/><polyline points="10.0,33.0 29.4,16.5 48.9,20.2 68.3,18.6 87.7,24.9 107.2,24.9 126.6,20.2 146.0,19.8 165.4,28.2 184.9,18.7 204.3,21.4 223.7,26.0 243.2,12.9 262.6,19.0 282.0,30.4 301.5,27.9 320.9,30.6 340.3,30.6 359.7,14.5 379.2,20.2 398.6,25.7 418.0,35.3 437.5,30.6 456.9,25.5 476.3,20.2 495.8,30.0 515.2,37.4 534.6,30.6 554.0,30.4 573.5,27.0" fill="none" stroke="#2c47a2" stroke-width="2.6" stroke-linejoin="round"/></svg>
<div class="t" style="left:1423.50px;top:1479.96px;font-size:16.00px;color:#1a1a1a;">Mo</div>
<div class="t" style="left:1430.15px;top:1506.96px;font-size:16.00px;color:#1a1a1a;">1</div>
<div class="t" style="left:1460.31px;top:1479.96px;font-size:16.00px;color:#1a1a1a;">We</div>
<div class="t" style="left:1467.71px;top:1506.96px;font-size:16.00px;color:#1a1a1a;">3</div>
<div class="t" style="left:1502.17px;top:1479.96px;font-size:16.00px;color:#1a1a1a;">Fr</div>
<div class="t" style="left:1505.27px;top:1506.96px;font-size:16.00px;color:#1a1a1a;">5</div>
<div class="t" style="left:1537.48px;top:1479.96px;font-size:16.00px;color:#1a1a1a;">Su</div>
<div class="t" style="left:1542.83px;top:1506.96px;font-size:16.00px;color:#1a1a1a;">7</div>
<div class="t" style="left:1575.79px;top:1479.96px;font-size:16.00px;color:#1a1a1a;">Tu</div>
<div class="t" style="left:1580.39px;top:1506.96px;font-size:16.00px;color:#1a1a1a;">9</div>
<div class="t" style="left:1613.05px;top:1479.96px;font-size:16.00px;color:#1a1a1a;">Th</div>
<div class="t" style="left:1614.10px;top:1506.96px;font-size:16.00px;color:#1a1a1a;">11</div>
<div class="t" style="left:1650.16px;top:1479.96px;font-size:16.00px;color:#1a1a1a;">Sa</div>
<div class="t" style="left:1651.06px;top:1506.96px;font-size:16.00px;color:#1a1a1a;">13</div>
<div class="t" style="left:1686.42px;top:1479.96px;font-size:16.00px;color:#1a1a1a;">Mo</div>
<div class="t" style="left:1688.62px;top:1506.96px;font-size:16.00px;color:#1a1a1a;">15</div>
<div class="t" style="left:1723.23px;top:1479.96px;font-size:16.00px;color:#1a1a1a;">We</div>
<div class="t" style="left:1726.18px;top:1506.96px;font-size:16.00px;color:#1a1a1a;">17</div>
<div class="t" style="left:1765.09px;top:1479.96px;font-size:16.00px;color:#1a1a1a;">Fr</div>
<div class="t" style="left:1763.74px;top:1506.96px;font-size:16.00px;color:#1a1a1a;">19</div>
<div class="t" style="left:1800.40px;top:1479.96px;font-size:16.00px;color:#1a1a1a;">Su</div>
<div class="t" style="left:1801.30px;top:1506.96px;font-size:16.00px;color:#1a1a1a;">21</div>
<div class="t" style="left:1838.71px;top:1479.96px;font-size:16.00px;color:#1a1a1a;">Tu</div>
<div class="t" style="left:1838.86px;top:1506.96px;font-size:16.00px;color:#1a1a1a;">23</div>
<div class="t" style="left:1875.97px;top:1479.96px;font-size:16.00px;color:#1a1a1a;">Th</div>
<div class="t" style="left:1876.42px;top:1506.96px;font-size:16.00px;color:#1a1a1a;">25</div>
<div class="t" style="left:1913.08px;top:1479.96px;font-size:16.00px;color:#1a1a1a;">Sa</div>
<div class="t" style="left:1913.98px;top:1506.96px;font-size:16.00px;color:#1a1a1a;">27</div>
<div class="t" style="left:1949.34px;top:1479.96px;font-size:16.00px;color:#1a1a1a;">Mo</div>
<div class="t" style="left:1951.54px;top:1506.96px;font-size:16.00px;color:#1a1a1a;">29</div>
<div class="t" style="left:1986.15px;top:1479.96px;font-size:16.00px;color:#1a1a1a;">We</div>
<div class="t" style="left:1989.10px;top:1506.96px;font-size:16.00px;color:#1a1a1a;">31</div>
<div class="t" style="left:1696.40px;top:1546.65px;font-size:14.00px;color:#1a1a1a;letter-spacing:1.200px;-webkit-text-stroke:0.8px #1a1a1a;transform:scaleX(0.9783);">DAYS</div>
<div class="t" style="left:1310px;top:1328px;width:90px;text-align:center;font-size:15px;font-weight:700;letter-spacing:0px;color:#1a1a1a;transform:rotate(-90deg);transform-origin:45px 9px;line-height:18px">% REACHED</div>
</div></body></html>
